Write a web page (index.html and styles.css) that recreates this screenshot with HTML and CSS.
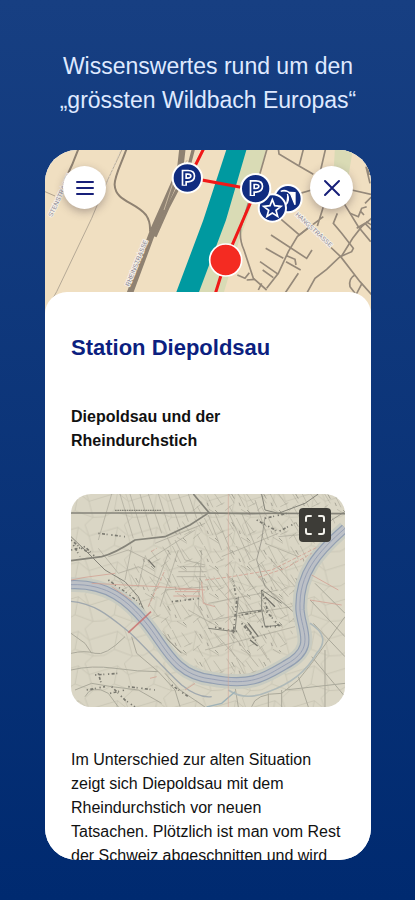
FILE: index.html
```html
<!DOCTYPE html>
<html lang="de">
<head>
  <meta charset="UTF-8">
  <meta name="viewport" content="width=device-width, initial-scale=1.0">
  <title>Station Diepoldsau</title>
  <link rel="stylesheet" href="styles.css">
</head>
<body>
  <h1 class="claim">Wissenswertes rund um den<br>„grössten Wildbach Europas“</h1>

  <main class="phone">
    <div class="map">
      <svg class="map-svg" viewBox="15 30 978 498" preserveAspectRatio="xMidYMin slice" aria-hidden="true">
        <rect x="0" y="0" width="1010" height="540" fill="#f0dfc1"/>
        <!-- green strips -->
        <path d="M618 20H680L630 210 595 310 545 480H465Z" fill="#d9dbb5"/>
        <path d="M885 20H940L925 110H880Z" fill="#dadbb5"/>
        <!-- river -->
        <path d="M562 20H622L558 240 468 480H400L490 240Z" fill="#0099a0"/>
        <!-- railway -->
        <g fill="none" stroke="#8f8272">
          <path d="M428 20L420 90 340 270 262 480" stroke-width="19"/>
          <path d="M462 20L445 85 385 200 345 290" stroke-width="10"/>
          <path d="M442 60L405 110 372 210" stroke="#c9b89f" stroke-width="3"/>
          <path d="M262 20C245 70 222 110 224 135C227 185 285 185 318 225Q332 245 330 275" stroke-width="6"/>
          <path d="M118 20L96 75 75 120" stroke-width="6"/>
          <path d="M15 155L45 168" stroke-width="2"/>
        </g>
        <g fill="none" stroke="#b5a996" stroke-width="3">
          <path d="M250 20L203 120 155 235 50 455 30 490"/>
          <path d="M240 35L200 130" stroke="#ddd3c4" stroke-dasharray="6 5"/>
        </g>
        <!-- village streets -->
        <g fill="none" stroke="#95897a" stroke-width="5">
          <path d="M683 20L655 118M625 190L602 265Q598 300 612 330L640 415 680 450"/>
          <path d="M592 405L615 415 628 398M620 420L645 418M655 450L665 430"/>
          <path d="M715 25L717 42 772 75 820 103M790 28L778 75M857 25L842 90"/>
          <path d="M780 160L815 150M935 150L1000 165M978 80L990 130M975 25L988 105"/>
          <path d="M720 235L778 285 850 230M850 200L832 258"/>
          <path d="M806 262L772 290 745 335 715 400 680 445"/>
          <path d="M693 285L800 355 816 330M677 325L730 355M740 347L765 358 768 375M738 365L782 390"/>
          <path d="M660 365L715 403M668 390L700 413M775 400L735 460"/>
          <path d="M865 315L902 350 960 425 1000 470"/>
          <path d="M892 220L880 250 905 280 940 325 935 335 900 350 860 388 825 415 800 460"/>
          <path d="M905 348L938 295 965 260 995 235M912 190L955 260 992 305"/>
          <path d="M930 220L955 230 965 205 980 200M960 212L972 225M950 265L975 250 995 270M975 190L995 170M978 245L995 255"/>
          <path d="M945 405Q925 415 930 440L945 460M966 430L945 470"/>
        </g>
        <!-- street names -->
        <g class="street">
          <text x="36" y="232" transform="rotate(-65 36 232)">STENSTRASSE</text>
          <text x="268" y="440" transform="rotate(-68 268 440)">RHEINSTRASSE</text>
          <text x="765" y="225" transform="rotate(43 765 225)">HANGSTRASSE</text>
        </g>
        <!-- route -->
        <path d="M494 20L464 80 442 112 648 150 558 358 520 480" fill="none" stroke="#f01818" stroke-width="9"/>
        <circle cx="557" cy="360" r="48" fill="#f42b22" stroke="#fff" stroke-width="5"/>
        <!-- points of interest -->
        <g fill="#102c80" stroke="#fff" stroke-width="6">
          <circle cx="744" cy="176" r="41"/>
          <path d="M722 154Q738 146 752 162L765 194V156M738 194Q750 180 742 162" fill="#fff" stroke-width="4"/>
          <circle cx="697" cy="204" r="41"/>
          <circle cx="442" cy="114" r="44"/>
          <circle cx="647" cy="146" r="44"/>
        </g>
        <path d="M697 179L704 197 723 199 708 211 713 229 697 219 681 229 686 211 671 199 690 197Z" fill="none" stroke="#fff" stroke-width="5"/>
        <g fill="none">
          <path d="M433 137V97H444Q458 97 458 108T444 120H434" stroke="#fff" stroke-width="16"/>
          <path d="M433 134V97H444Q458 97 458 108T444 120H434" stroke="#102c80" stroke-width="6"/>
          <path d="M637 168V128H648Q662 128 662 139T648 151H638" stroke="#fff" stroke-width="16"/>
          <path d="M637 165V128H648Q662 128 662 139T648 151H638" stroke="#102c80" stroke-width="6"/>
        </g>
      </svg>
      <div class="map-buttons">
        <button class="round-btn" type="button" aria-label="Menü">
          <svg width="18" height="14" viewBox="0 0 18 14"><path d="M1 1H17M1 7H17M1 13H17"/></svg>
        </button>
        <button class="round-btn" type="button" aria-label="Schliessen">
          <svg width="18" height="18" viewBox="0 0 18 18"><path d="M2 2L16 16M16 2L2 16"/></svg>
        </button>
      </div>
    </div>

    <article class="sheet">
      <h2 class="title">Station Diepoldsau</h2>
      <h3 class="subtitle">Diepoldsau und der<br>Rheindurchstich</h3>

      <div class="picture">
        <svg class="picture-svg" viewBox="18 12 822 639" preserveAspectRatio="xMidYMid slice" aria-hidden="true">
          <defs>
            <pattern id="fields" width="96" height="84" patternUnits="userSpaceOnUse">
              <path d="M5 2L28 40M34 0L60 52M62 8L88 45M12 48L30 80M48 58L78 76M0 62L22 44M70 50L94 38" fill="none" stroke="#8c8b7d" stroke-width="2"/>
              <path d="M20 12L28 26M66 60L76 70M42 38L46 48" stroke="#737268" stroke-width="3"/>
            </pattern>
            <pattern id="plots" width="118" height="104" patternUnits="userSpaceOnUse">
              <path d="M0 20L40 8 72 34 118 20M40 8L30 62 0 80M72 34L84 82 118 80M30 62L84 82 60 104M60 0L72 34" fill="none" stroke="#a09e8e" stroke-width="2"/>
            </pattern>
          </defs>
          <rect width="860" height="670" fill="#dad6c5"/>
          <rect width="860" height="670" fill="url(#plots)" opacity="0.4"/>
          <path d="M430 12H840V70L760 150 700 240 690 420 640 500 560 560 440 550 330 480 230 360 130 280 300 150Z" fill="url(#fields)" opacity="0.5"/>
          <!-- parcels -->
          <g fill="none" stroke="#a9a698" stroke-width="2">
            <path d="M140 12L100 150M165 12L205 145M195 12L235 140M225 12L262 138M250 12L290 130M280 12L315 122M310 12L345 112M340 12L370 95M370 12L395 85"/>
            <path d="M430 75L470 180M450 70L500 190M490 65L555 210M530 70L580 190M570 30L610 150M470 200L640 130"/>
            <path d="M100 175L160 250 220 230 290 270M130 200L190 180 250 210 390 120M200 170L180 270M240 200L220 290M270 160L420 100M310 190L250 350M340 180L285 350"/>
            <path d="M330 150L360 210 420 225M345 230H420M340 245H425M335 260H420M300 300L430 290M410 180L400 350 440 430M370 360L440 400"/>
            <path d="M430 260L500 340M455 240L540 370M485 250L590 400M520 230L620 370M550 220L650 350M580 220L670 320M610 200L690 290M450 430L540 530M500 430L580 530M550 420L610 510"/>
            <path d="M420 480L690 410M600 160L700 200M640 140L750 130M430 340L640 300M440 390L680 350"/>
          </g>
          <!-- south bank tracks -->
          <g fill="none" stroke="#aba99b" stroke-width="3">
            <path d="M18 540Q80 525 150 535T280 545M18 490Q60 480 90 490T180 440M18 430L60 460 80 490M200 440L215 490 280 545 330 600 345 650"/>
            <path d="M560 650Q570 610 650 610L700 570 740 520 840 380M735 330L840 440M745 400L840 500M750 280L840 370M740 500L840 620M660 600L840 580M700 560L730 651M780 480V651M510 590L520 651M610 610V651M650 600V651"/>
            <path d="M60 620Q80 580 130 610L160 651M30 600L80 580 140 590 220 600 290 640M300 550L345 600 420 651"/>
          </g>
          <!-- roads -->
          <g fill="none" stroke="#85847a">
            <path d="M18 69H430L840 71" stroke-width="5"/>
            <path d="M150 61H290" stroke-width="4" stroke-dasharray="5 2"/>
            <path d="M385 12L432 68 375 105 300 140 210 150Q150 190 110 200L18 212" stroke-width="5"/>
            <path d="M432 70L560 72 640 70 720 40 760 12M590 12L600 60 640 70" stroke-width="3"/>
            <path d="M18 140L60 180 120 240 180 275 220 320 240 370 300 440 350 490" stroke-width="3"/>
            <path d="M740 150L800 90 840 65M600 80L590 150 575 210 600 290 690 370" stroke-width="2"/>
            <path d="M430 415L510 425 520 320M520 370L590 360 600 410 650 405M590 360V300L650 340" stroke-width="3"/>
          </g>
          <!-- houses -->
          <g fill="none" stroke="#7b7a71" stroke-width="5" stroke-dasharray="4 7 9 5 3 11">
            <path d="M18 150L50 175 75 190M18 180L60 170 90 200M25 165L45 200M100 130L180 140"/>
            <path d="M505 430L515 330 505 275M450 412L520 425M530 375L600 360 645 410M590 300L610 370M530 400L575 455M590 410H640"/>
            <path d="M575 90L640 125 690 100M600 85L665 70M130 270L220 335 260 400 320 475"/>
            <path d="M90 555L160 550M100 550L110 585M140 590L180 630 210 651M65 600L120 590M190 590L270 600M135 610L180 600"/>
            <path d="M320 335L405 325M320 585L370 620"/>
          </g>
          <path d="M540 405L560 430M550 400L580 440M600 320L630 350M555 450L578 468M250 210L270 232" stroke="#77766d" stroke-width="4"/>
          <!-- Rhine -->
          <g fill="none">
            <path d="M18 284C130 280 190 335 240 395C300 465 325 555 440 567C560 590 600 560 660 525C755 475 710 425 705 360C700 250 760 185 840 115" stroke="#c8cbc1" stroke-width="44"/>
            <path d="M18 284C130 280 190 335 240 395C300 465 325 555 440 567C560 590 600 560 660 525C755 475 710 425 705 360C700 250 760 185 840 115" stroke="#929fb2" stroke-width="28"/>
            <path d="M18 284C130 280 190 335 240 395C300 465 325 555 440 567C560 590 600 560 660 525C755 475 710 425 705 360C700 250 760 185 840 115" stroke="#bcc0c6" stroke-width="21"/>
            <path d="M18 284C130 280 190 335 240 395C300 465 325 555 440 567C560 590 600 560 660 525C755 475 710 425 705 360C700 250 760 185 840 115" stroke="#98a1b5" stroke-width="3"/>
            <path d="M18 334C90 340 135 380 195 428C245 475 290 530 350 585Q400 625 440 620" stroke="#a0a8ae" stroke-width="4"/>
            <path d="M735 400Q800 440 755 490Q710 570 610 605Q540 635 490 600" stroke="#b0bab9" stroke-width="5"/>
            <path d="M425 651L470 640 510 605" stroke="#9eb2b8" stroke-width="4"/>
          </g>
          <!-- planned cut -->
          <g fill="none" stroke="#d3a294" stroke-width="3" opacity="0.8">
            <path d="M190 428L258 365" stroke="#c96d6b" stroke-width="5"/>
            <path d="M60 262L150 250M80 280L280 290 420 300M18 270L60 262M140 290L200 330M330 305H405M325 318H405M340 298H400"/>
            <path d="M250 350L300 240M258 185L275 175M420 270L500 260 620 240 760 170M580 262L660 235 740 190" stroke-dasharray="12 5"/>
            <path d="M740 255L820 300M735 330L830 345M360 600L390 580M255 565L275 560"/>
            <path d="M490 12V651" stroke-width="2"/>
            <path d="M410 275L415 340 450 350"/>
          </g>
        </svg>
        <button class="expand-btn" type="button" aria-label="Vollbild">
          <svg width="22" height="22" viewBox="0 0 22 22"><path d="M2 7V4Q2 2 4 2H7M15 2H18Q20 2 20 4V7M20 15V18Q20 20 18 20H15M7 20H4Q2 20 2 18V15"/></svg>
        </button>
      </div>

      <p class="text">Im Unterschied zur alten Situation zeigt sich Diepoldsau mit dem Rheindurchstich vor neuen<br>Tatsachen. Plötzlich ist man vom Rest der Schweiz abgeschnitten und wird</p>
    </article>
  </main>
</body>
</html>
```
FILE: styles.css
```css
* {
  box-sizing: border-box;
}

body {
  display: flex;
  flex-direction: column;
  height: 100vh;
  margin: 0;
  padding: 49px 44px 40px 45px;
  background: linear-gradient(#173f82, #002a70);
  font-family: "Liberation Sans", Arial, sans-serif;
  color: #111;
}

.claim {
  margin: 0 -20px 33px;
  font-size: 23px;
  font-weight: 400;
  line-height: 34px;
  text-align: center;
  color: #dfe9ff;
}

.phone {
  flex: 1;
  min-height: 0;
  overflow: hidden;
  border-radius: 32px;
  background: #fff;
}

/* Map */
.map {
  position: relative;
}

.map-svg {
  display: block;
  width: 100%;
}

.street {
  font-size: 19px;
  fill: #8b8793;
  stroke: #f7f2ea;
  stroke-width: 5px;
  paint-order: stroke;
}

.map-buttons {
  position: absolute;
  top: 16px;
  left: 18px;
  right: 18px;
  display: flex;
  justify-content: space-between;
}

.round-btn {
  display: flex;
  align-items: center;
  justify-content: center;
  width: 43px;
  height: 43px;
  padding: 0;
  border: none;
  border-radius: 50%;
  background: #fff;
  box-shadow: 0 3px 8px rgba(60, 50, 60, 0.35);
}

.round-btn svg {
  fill: none;
  stroke: #171f79;
  stroke-width: 2px;
  stroke-linecap: round;
}

/* Station sheet */
.sheet {
  position: relative;
  margin-top: -24px;
  padding: 43px 26px 0;
  border-radius: 22px 22px 0 0;
  background: #fff;
}

.title {
  margin: 0 0 44px;
  font-size: 22px;
  line-height: 26px;
  color: #0c1f80;
}

.subtitle {
  margin: 0 0 41px;
  font-size: 16px;
  line-height: 24px;
}

.picture {
  position: relative;
  margin-bottom: 41px;
  border-radius: 20px;
  overflow: hidden;
}

.picture-svg {
  display: block;
  width: 100%;
}

.expand-btn {
  position: absolute;
  top: 14px;
  right: 14px;
  display: flex;
  align-items: center;
  justify-content: center;
  width: 32px;
  height: 34px;
  padding: 0;
  border: none;
  border-radius: 4px;
  background: #3d3c37;
}

.expand-btn svg {
  fill: none;
  stroke: #f4f3ed;
  stroke-width: 2px;
  stroke-linecap: round;
}

.text {
  margin: 0;
  font-size: 16px;
  line-height: 24px;
}
```
